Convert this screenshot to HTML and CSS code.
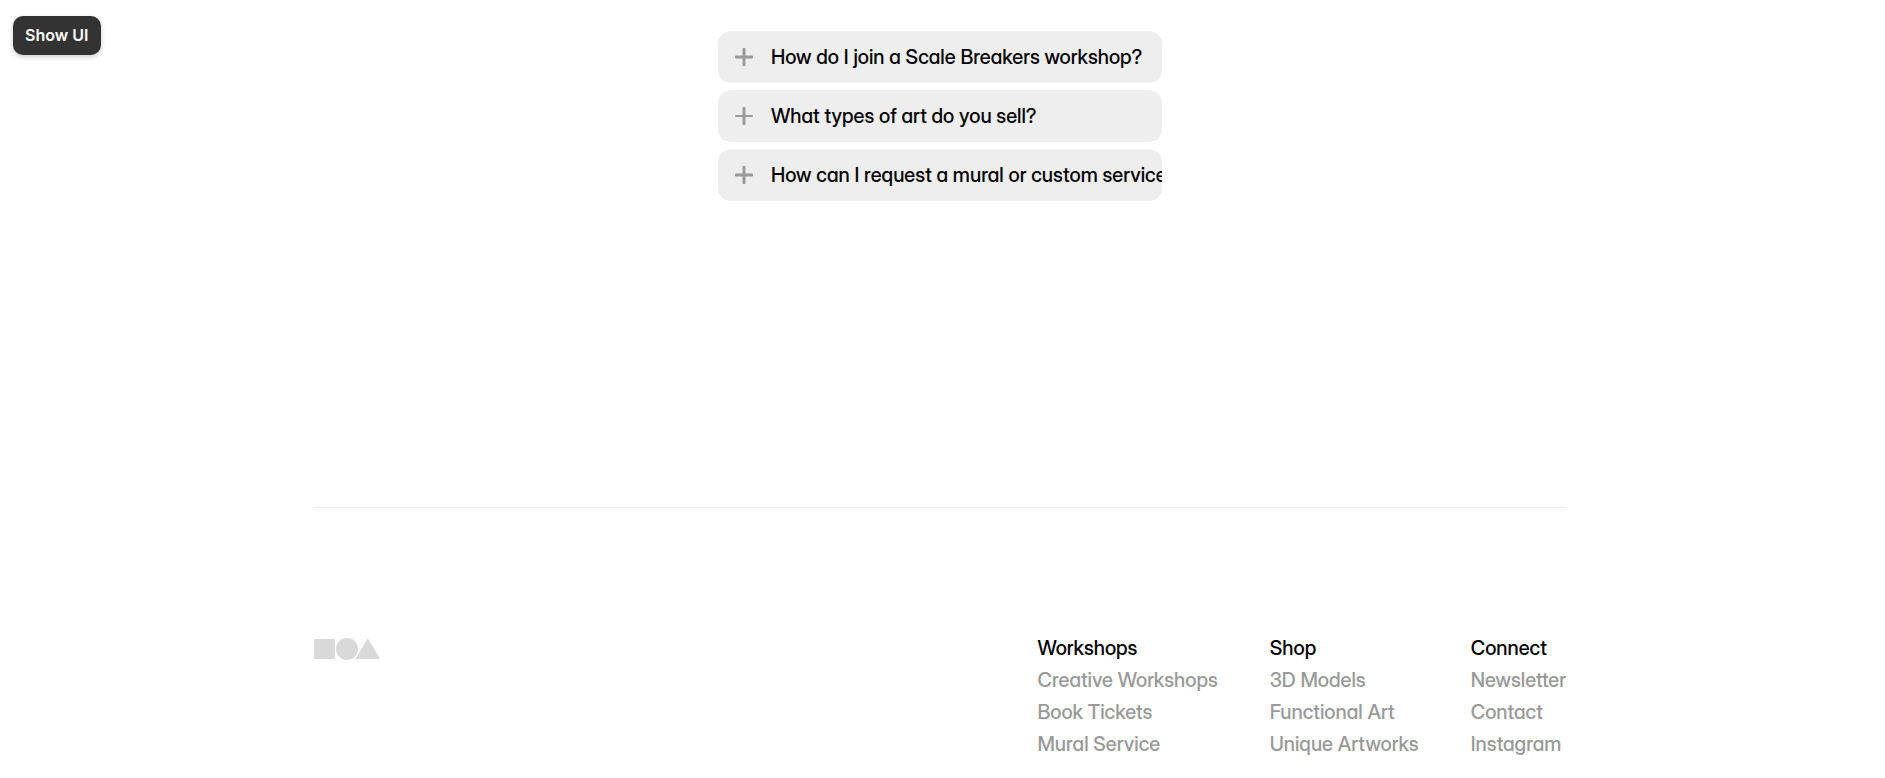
FILE: index.html
```html
<!DOCTYPE html>
<html lang="en">
<head>
<meta charset="utf-8">
<meta name="viewport" content="width=device-width, initial-scale=1">
<title>Workshops</title>
<link rel="stylesheet" href="styles.css">
</head>
<body>
<button class="show-ui" type="button">Show UI</button>
<main class="faq">
  <button class="question" type="button">
    <svg class="plus" viewBox="0 0 18 18" aria-hidden="true"><rect x="7.500" width="3" height="18" rx="1"/><rect y="7.500" width="18" height="3" rx="1"/></svg>
    <span>How do I join a Scale Breakers workshop?</span>
  </button>
  <button class="question" type="button">
    <svg class="plus" viewBox="0 0 18 18" aria-hidden="true"><rect x="7.500" width="3" height="18" rx="1"/><rect y="8" width="18" height="2" rx="1"/></svg>
    <span>What types of art do you sell?</span>
  </button>
  <button class="question" type="button">
    <svg class="plus" viewBox="0 0 18 18" aria-hidden="true"><rect x="7.500" width="3" height="18" rx="1"/><rect y="7.500" width="18" height="3" rx="1"/></svg>
    <span>How can I request a mural or custom service?</span>
  </button>
</main>
<footer class="footer">
  <svg class="logo" viewBox="0 0 66 22" role="img" aria-label="Logo"><rect y="1" width="21" height="20" rx="1"/><circle cx="33" cy="11" r="11"/><path d="M53 1.500Q53.700 .5 54.400 1.500L65.600 20Q66 21 65 21H42.500Q41.500 21 42 20Z"/></svg>
  <nav class="links" aria-label="Footer">
    <section>
      <h2>Workshops</h2>
      <a href="#">Creative Workshops</a>
      <a href="#">Book Tickets</a>
      <a href="#">Mural Service</a>
    </section>
    <section>
      <h2>Shop</h2>
      <a href="#">3D Models</a>
      <a href="#">Functional Art</a>
      <a href="#">Unique Artworks</a>
    </section>
    <section>
      <h2>Connect</h2>
      <a href="#">Newsletter</a>
      <a href="#">Contact</a>
      <a href="#">Instagram</a>
    </section>
  </nav>
</footer>
</body>
</html>
```
FILE: styles.css
```css
* { box-sizing: border-box; }
body {
  margin: 0;
  padding: 31px 5px 0 0;
  background: #fff;
  color: #000;
  font-family: "Inter Display", Inter, "Liberation Sans", sans-serif;
  font-size: 20px;
  font-weight: 500;
  font-feature-settings: "cv11" 1;
}
button { border: 0; font: inherit; color: inherit; cursor: pointer; }
.show-ui {
  position: absolute;
  top: 16px;
  left: 13px;
  padding: 10px 13px 10px 12px;
  border-radius: 10px;
  background: #333;
  box-shadow: 0 2px 5px rgba(0, 0, 0, .2);
  color: #fff;
  font-family: Inter, "Liberation Sans", sans-serif;
  font-size: 16px;
  font-weight: 600;
  line-height: 19px;
}
.faq {
  display: flex;
  flex-direction: column;
  gap: 7px;
  width: 444px;
  max-width: 100%;
  margin: 0 auto;
}
.question {
  display: flex;
  align-items: center;
  gap: 18px;
  overflow: hidden;
  padding: 13px 17px;
  border-radius: 13px;
  background: #eee;
  line-height: 26px;
  text-align: left;
  white-space: nowrap;
}
.plus {
  flex: none;
  width: 18px;
  height: 18px;
  fill: #999;
}
.footer {
  display: flex;
  align-items: flex-start;
  justify-content: space-between;
  width: 66.600%;
  margin: 306px auto 0;
  padding: 124px 0 17px;
  border-top: 1px solid #ededed;
}
.logo { width: 66px; height: 22px; margin-top: 6px; fill: #d9d9d9; }
.links {
  display: grid;
  grid-template-columns: repeat(3, auto);
  gap: 52px;
}
.links section { display: grid; grid-auto-rows: 1fr; }
.links h2 { margin: 0; font: inherit; line-height: 32px; }
.links a { color: #999; line-height: 32px; text-decoration: none; }
```
